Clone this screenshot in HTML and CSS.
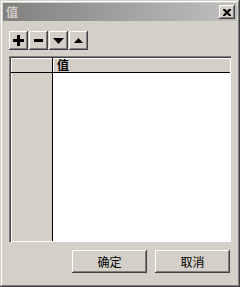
FILE: index.html
```html
<!DOCTYPE html>
<html lang="zh">
<head>
    <meta charset="UTF-8">
    <title>值</title>
    <link rel="stylesheet" href="styles.css">
</head>
<body>
    <div class="window">
        <div class="titlebar">
            <span class="titlebar__text">值</span>
            <button class="titlebar__close">
                <svg width="8" height="7" viewBox="0 0 8 7">
                    <path d="M0 0h2l2 2 2-2h2v1l-2.5 2.5 2.5 2.5v1h-2l-2-2-2 2h-2v-1l2.5-2.5-2.5-2.5z" fill="#000"/>
                </svg>
            </button>
        </div>
        <div class="content">
            <div class="toolbar">
                <button class="tool-button">
                    <svg width="11" height="11" viewBox="0 0 11 11"><path d="M4 0h3v4h4v3h-4v4h-3v-4h-4v-3h4z" fill="#000"/></svg>
                </button>
                <button class="tool-button">
                    <svg width="11" height="11" viewBox="0 0 11 11"><rect x="1" y="4" width="9" height="3" fill="#000"/></svg>
                </button>
                <button class="tool-button">
                    <svg width="11" height="11" viewBox="0 0 11 11"><path d="M0 3h11l-5.5 6z" fill="#000"/></svg>
                </button>
                <button class="tool-button">
                    <svg width="11" height="11" viewBox="0 0 11 11"><path d="M1 8h9l-4.5-5z" fill="#000"/></svg>
                </button>
            </div>
            <div class="grid">
                <div class="grid__head">
                    <div class="grid__corner"></div>
                    <div class="grid__col">值</div>
                </div>
                <div class="grid__rows">
                    <div class="grid__side"></div>
                    <div class="grid__cells"></div>
                </div>
            </div>
            <div class="footer">
                <button class="button">确定</button>
                <button class="button">取消</button>
            </div>
        </div>
    </div>
</body>
</html>
```
FILE: styles.css
```css
:root {
    --face: #d4d0c8;
    --light: #ffffff;
    --shadow: #808080;
    --dark: #404040;
}

body {
    margin: 0;
    font-family: "Noto Sans CJK SC", "Liberation Sans", sans-serif;
    font-size: 12px;
}

button {
    font-family: inherit;
    font-size: 12px;
    padding: 0;
    border: none;
    background: var(--face);
    color: #000;
    display: flex;
    align-items: center;
    justify-content: center;
}

.window {
    width: 240px;
    height: 287px;
    box-sizing: border-box;
    padding: 3px;
    background: var(--face);
    box-shadow: inset -1px -1px var(--dark), inset 1px 1px var(--face),
        inset -2px -2px var(--shadow), inset 2px 2px var(--light);
    display: flex;
    flex-direction: column;
}

.titlebar {
    height: 18px;
    display: flex;
    align-items: center;
    justify-content: space-between;
    padding: 0 2px 0 3px;
    background: linear-gradient(to right, #808080, #c0c0c0);
}

.titlebar__text {
    color: #d4d0c8;
    font-weight: 700;
    font-size: 12px;
    line-height: 1;
}

.titlebar__close {
    width: 16px;
    height: 14px;
    box-shadow: inset -1px -1px var(--dark), inset 1px 1px var(--light),
        inset -2px -2px var(--shadow);
}

.content {
    flex: 1;
    display: flex;
    flex-direction: column;
    padding: 10px 6px 0 6px;
}

.toolbar {
    display: flex;
    gap: 1px;
}

.tool-button,
.button {
    box-shadow: inset -1px -1px var(--dark), inset 1px 1px var(--light),
        inset -2px -2px var(--shadow);
}

.tool-button {
    width: 19px;
    height: 19px;
}

.grid {
    margin-top: 6px;
    height: 186px;
    box-sizing: border-box;
    padding: 2px 1px 1px 2px;
    display: flex;
    flex-direction: column;
    box-shadow: inset 1px 1px var(--shadow), inset 2px 2px var(--dark),
        inset -1px -1px var(--light);
}

.grid__head {
    display: flex;
    height: 14px;
    border-bottom: 1px solid #000;
}

.grid__corner {
    width: 41px;
    border-right: 1px solid #000;
    box-shadow: inset 1px 1px var(--light);
}

.grid__col {
    flex: 1;
    padding-left: 4px;
    font-weight: 700;
    line-height: 14px;
    box-shadow: inset 1px 1px var(--light);
}

.grid__rows {
    flex: 1;
    display: flex;
}

.grid__side {
    width: 41px;
    border-right: 1px solid #000;
    box-shadow: inset 1px 0 var(--light);
}

.grid__cells {
    flex: 1;
    background: #fff;
}

.footer {
    display: flex;
    justify-content: flex-end;
    gap: 8px;
    margin-top: 8px;
    padding-right: 1px;
}

.button {
    width: 75px;
    height: 23px;
}
```
